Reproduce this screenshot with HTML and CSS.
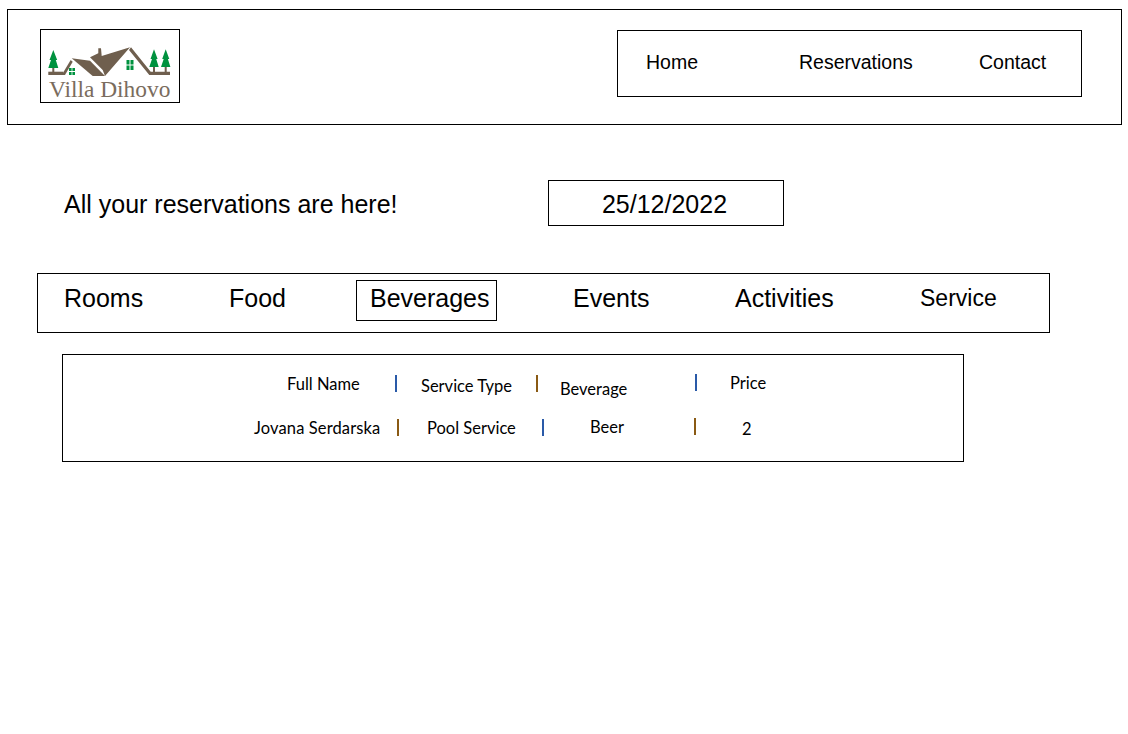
FILE: index.html
```html
<!DOCTYPE html>
<html lang="en">
<head>
  <meta charset="UTF-8">
  <title>Villa Dihovo - Reservations</title>
  <link rel="stylesheet" href="styles.css">
</head>
<body>
  <!-- Header -->
  <header class="header">
    <div class="logo">
      <svg width="138" height="72" viewBox="1 1 138 72">
        <g fill="#00923f">
          <polygon points="13.3,21 9.5,31 11,31 8.3,39 18.3,39 15.8,31 17.2,31"/>
          <polygon points="114,20.3 110.5,30 112,30 109.3,38 118.7,38 116.2,30 117.6,30"/>
          <polygon points="125.7,20.3 122.2,30 123.7,30 121,38 130.4,38 127.9,30 129.3,30"/>
          <rect x="29" y="39" width="2.6" height="3"/><rect x="32.4" y="39" width="2.6" height="3"/>
          <rect x="29" y="43" width="2.6" height="3"/><rect x="32.4" y="43" width="2.6" height="3"/>
          <rect x="86.5" y="31" width="3" height="4.5"/><rect x="90.5" y="31" width="3" height="4.5"/>
          <rect x="86.5" y="36.5" width="3" height="4.5"/><rect x="90.5" y="36.5" width="3" height="4.5"/>
        </g>
        <g fill="#6f5f4e">
          <rect x="12.3" y="39" width="2" height="4"/>
          <rect x="113" y="38" width="2" height="5"/>
          <rect x="124.7" y="38" width="2" height="5"/>
          <rect x="8.3" y="42.7" width="15" height="3.3"/>
          <polygon points="21.7,46 30.7,31 32.7,32.7 25,46"/>
          <polygon points="31.7,29.3 50,31.7 65,47 52.7,47"/>
          <polygon points="50,28.3 58.3,24.3 58.3,19.3 61,19.3 61.7,27 90,18.3 65,47 62.7,41"/>
          <polygon points="91,18.3 110.7,42.7 130,42.7 130,46 109.3,46 89,21"/>
        </g>
        <text class="logo-text" x="9" y="68">Villa Dihovo</text>
      </svg>
    </div>
    <nav class="nav">
      <a class="nav-home">Home</a>
      <a class="nav-res">Reservations</a>
      <a>Contact</a>
    </nav>
  </header>

  <!-- Title and date -->
  <div class="title-row">
    <div class="title">All your reservations are here!</div>
    <div class="date">25/12/2022</div>
  </div>

  <!-- Tabs -->
  <div class="tabs">
    <span class="tab tab-rooms">Rooms</span>
    <span class="tab tab-food">Food</span>
    <span class="tab tab-bev active">Beverages</span>
    <span class="tab tab-events">Events</span>
    <span class="tab tab-act">Activities</span>
    <span class="tab tab-service">Service</span>
  </div>

  <!-- Reservation table -->
  <div class="results">
    <div class="row row-head">
      <span class="cell h-name">Full Name</span><i class="sep blue"></i>
      <span class="cell h-type drop-1">Service Type</span><i class="sep brown"></i>
      <span class="cell h-item drop-2">Beverage</span><i class="sep blue up"></i>
      <span class="cell h-price up-1">Price</span>
    </div>
    <div class="row row-data">
      <span class="cell d-name">Jovana Serdarska</span><i class="sep brown"></i>
      <span class="cell d-type">Pool Service</span><i class="sep blue"></i>
      <span class="cell d-item up-1">Beer</span><i class="sep brown up"></i>
      <span class="cell d-price drop-1">2</span>
    </div>
  </div>
</body>
</html>
```

FILE: styles.css
```css
/* Reset & base */
* { box-sizing: border-box; margin: 0; padding: 0; }
body { font-family: "Liberation Sans", Arial, sans-serif; background: #ffffff; color: #000000; padding: 9px 6px 0 7px; }

/* Header */
.header { height: 116px; border: 1px solid #000; display: flex; justify-content: space-between; padding: 19px 39px 0 32px; }
.logo { width: 140px; height: 74px; border: 1px solid #000; }
.logo svg { display: block; }
.logo-text { font-family: "Liberation Serif", serif; font-size: 23.4px; fill: #7a6c5d; }
.nav { width: 465px; height: 67px; border: 1px solid #000; margin-top: 1px; display: flex; align-items: center; padding: 0 0 2px 28px; font-size: 19.5px; }
.nav-home { width: 153px; }
.nav-res { width: 180px; }

/* Title and date */
.title-row { display: flex; margin-top: 55px; padding-left: 57px; align-items: center; }
.title { width: 484px; font-size: 25px; padding-top: 2px; }
.date { width: 236px; height: 46px; border: 1px solid #000; font-size: 25px; display: flex; align-items: center; justify-content: center; padding: 2px 3px 0 0; }

/* Tabs */
.tabs { width: 1013px; height: 60px; margin: 47px 0 0 30px; border: 1px solid #000; display: flex; align-items: flex-start; padding: 6px 0 0 11px; font-size: 25px; }
.tab { display: block; height: 41px; line-height: 23px; padding: 6px 14px 0; border: 1px solid transparent; }
.tab.active { border-color: #000; padding-left: 13px; }
.tab-rooms { width: 165px; }
.tab-food { width: 142px; }
.tab-bev { width: 141px; margin-right: 61px; }
.tab-events { width: 162px; }
.tab-act { width: 185px; }
.tab-service { font-size: 23px; }

/* Reservation table */
.results { width: 902px; height: 108px; margin: 21px 0 0 55px; border: 1px solid #000; font-family: Lato, sans-serif; font-size: 16.5px; }
.row { display: flex; align-items: flex-start; height: 20px; padding-left: 189px; }
.row-head { margin-top: 19px; }
.row-data { margin-top: 24px; }
.cell { display: block; line-height: 20px; }
.sep { display: block; width: 2px; height: 17px; margin-top: 1px; }
.blue { background: #2a5aa8; }
.brown { background: #8a5a14; }
.sep.up { margin-top: 0; }
.drop-1 { margin-top: 2px; }
.drop-2 { margin-top: 5px; }
.up-1 { margin-top: -1px; }
.d-price.drop-1 { margin-top: 1px; }

/* Cell widths, the columns do not line up between the two rows */
.h-name { width: 143px; padding-left: 35px; }
.h-type { width: 139px; padding-left: 24px; }
.h-item { width: 157px; padding-left: 22px; }
.h-price { padding-left: 33px; }
.d-name { width: 145px; padding-left: 2px; letter-spacing: 0.12px; }
.d-type { width: 143px; padding-left: 28px; }
.d-item { width: 150px; padding-left: 46px; }
.d-price { padding-left: 46px; }
```
